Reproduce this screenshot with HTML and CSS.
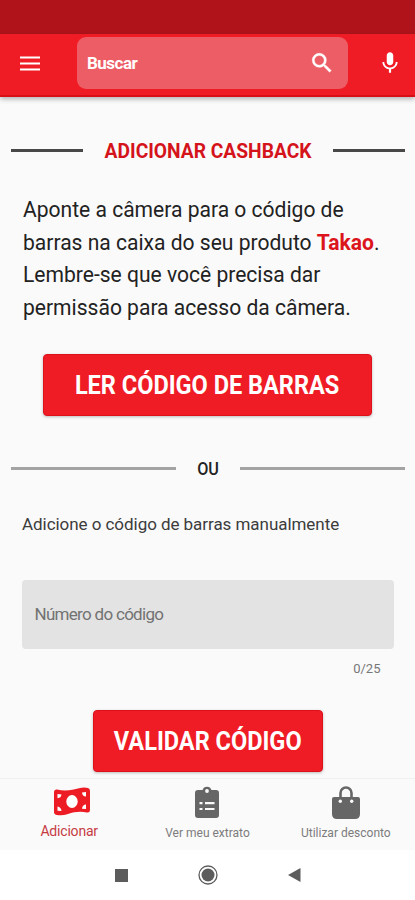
FILE: index.html
```
<!DOCTYPE html>
<html lang="pt-BR">
<head>
<meta charset="UTF-8">
<meta name="viewport" content="width=device-width, initial-scale=1.0">
<title>Adicionar Cashback</title>
<link rel="stylesheet" href="styles.css">
</head>
<body>
    <div class="status-bar"></div>
    <header class="header">
        <svg class="menu-icon" width="20" height="15" viewBox="0 0 20 15"><path d="M0 1.500h20M0 7.500h20M0 13.500h20" stroke="#fff" stroke-width="2"/></svg>
        <div class="search">
            <span class="search-text">Buscar</span>
            <svg width="26" height="26" viewBox="0 0 24 24" fill="#fff" stroke="#fff" stroke-width=".4"><path d="M15.5 14h-.79l-.28-.27A6.47 6.47 0 0 0 16 9.500 6.500 6.500 0 1 0 9.500 16c1.610 0 3.090-.59 4.230-1.570l.27.28v.79l5 4.990L20.490 19l-4.990-5zm-6 0C7.010 14 5 11.990 5 9.500S7.010 5 9.500 5 14 7.010 14 9.500 11.990 14 9.500 14z"/></svg>
        </div>
        <svg class="mic-icon" width="26" height="26" viewBox="0 0 24 24" fill="#fff"><path d="M12 14c1.660 0 3-1.340 3-3V5c0-1.660-1.340-3-3-3S9 3.340 9 5v6c0 1.660 1.340 3 3 3zM17.300 11c0 3-2.540 5.100-5.300 5.100S6.700 14 6.700 11H5c0 3.410 2.720 6.230 6 6.720V21h2v-3.280c3.280-.48 6-3.300 6-6.720h-1.700z"/></svg>
    </header>

    <main class="content">
        <div class="divider title">
            <h1>ADICIONAR CASHBACK</h1>
        </div>
        <p class="intro">Aponte a câmera para o código de<br>barras na caixa do seu produto <b>Takao</b>.<br>Lembre-se que você precisa dar<br>permissão para acesso da câmera.</p>
        <button class="btn btn-scan"><span>LER CÓDIGO DE BARRAS</span></button>
        <div class="divider or"><span>OU</span></div>
        <label class="manual" for="code">Adicione o código de barras manualmente</label>
        <input class="code" type="text" id="code" maxlength="25" placeholder="Número do código">
        <div class="counter">0/25</div>
        <button class="btn btn-validate"><span>VALIDAR CÓDIGO</span></button>
    </main>

    <nav class="tabs">
        <div class="tab active">
            <svg width="38" height="34" viewBox="0 0 38 34">
                <path d="M1 6Q1 3 4 3.500C12 5.500 20 4 26 2.200Q31 .8 35 2Q37 2.500 37 5V24Q37 27 34 26.500C27 25 21 26 15 28Q9 30 4 29Q1 28.500 1 26Z" fill="#ed1c24"/>
                <ellipse cx="19" cy="15.500" rx="5.700" ry="6.500" fill="#fff"/>
                <path d="M4.500 8l4 .6q-.4 3.500-4 3.600zM29 6.500l4-.5v4.500q-3.600-.2-4-4zM4.500 20.500q3.600.5 4 4.600l-4-.3zM33 18.500v4.600l-4-.4q.4-3.900 4-4.200z" fill="#fff"/>
            </svg>
            <span>Adicionar</span>
        </div>
        <div class="tab">
            <svg width="26" height="34" viewBox="0 0 26 34">
                <path d="M4 4h4.500a4.700 4.700 0 0 1 9 0H22q3 0 3 3v22q0 3-3 3H4q-3 0-3-3V7q0-3 3-3z" fill="#666"/>
                <circle cx="13" cy="5" r="1.900" fill="#fafafa"/>
                <path d="M5.500 17.200h3M11 17.200h9.500M5.500 23h3M11 23h9.500" stroke="#fafafa" stroke-width="2.200"/>
            </svg>
            <span>Ver meu extrato</span>
        </div>
        <div class="tab">
            <svg width="30" height="34" viewBox="0 0 30 34">
                <path d="M9.500 15V7a5.500 5.500 0 0 1 11 0v8" fill="none" stroke="#666" stroke-width="2.600"/>
                <path d="M3 11h24q2 0 2 2v15q0 5-5 5H6q-5 0-5-5V13q0-2 2-2z" fill="#666"/>
                <circle cx="9.300" cy="15.300" r="1.700" fill="#fafafa"/>
                <circle cx="20.700" cy="15.300" r="1.700" fill="#fafafa"/>
            </svg>
            <span>Utilizar desconto</span>
        </div>
    </nav>
    <div class="system-nav">
        <svg width="13" height="13" viewBox="0 0 13 13"><path d="M0 0h13v13H0z" fill="#5c5c5c"/></svg>
        <svg width="20" height="20" viewBox="0 0 20 20"><circle cx="10" cy="10" r="9" fill="none" stroke="#5c5c5c" stroke-width="1.300"/><circle cx="10" cy="10" r="6.500" fill="#5c5c5c"/></svg>
        <svg width="13" height="14" viewBox="0 0 13 14"><path d="M0 7L12.500 0v14z" fill="#5c5c5c"/></svg>
    </div>
</body>
</html>
```

FILE: styles.css
```
* {
    box-sizing: border-box;
}

body {
    margin: 0;
    width: 415px;
    height: 900px;
    overflow: hidden;
    display: flex;
    flex-direction: column;
    background-color: #fafafa;
    color: #222;
    font-family: Roboto, sans-serif;
}

svg {
    display: block;
    flex: none;
}

.status-bar {
    height: 34px;
    background-color: #b1131b;
}

.header {
    height: 63px;
    display: flex;
    align-items: flex-start;
    padding: 3px 12px 0 20px;
    background-color: #ef1c25;
    border-bottom: 2px solid #d90f17;
    box-shadow: 0 2px 5px rgba(0, 0, 0, 0.3);
}

.menu-icon {
    margin: 19px 37px 0 0;
}

.search {
    width: 271px;
    height: 52px;
    display: flex;
    align-items: center;
    justify-content: space-between;
    padding: 0 13px 0 10px;
    border-radius: 9px;
    background-color: #ed5d65;
    color: #fff;
    font-size: 17px;
    font-weight: bold;
}

.search-text {
    letter-spacing: -0.5px;
}

.mic-icon {
    margin: 13px 0 0 29px;
}

.content {
    flex: 1;
    display: flex;
    flex-direction: column;
    align-items: center;
    min-height: 0;
}

.divider {
    width: 394px;
    display: flex;
    align-items: center;
    justify-content: space-between;
    white-space: nowrap;
}

.divider::before,
.divider::after {
    content: "";
    height: 3px;
}

.title {
    height: 30px;
    margin: 39px 0 0 1px;
}

.title::before,
.title::after {
    width: 72px;
    margin-bottom: 2px;
    background-color: #484848;
}

h1 {
    margin: 0;
    font-size: 21px;
    color: #d5131b;
    transform: scaleX(0.915);
}

.intro {
    width: 371px;
    margin: 28px 0 0 1px;
    font-size: 22px;
    line-height: 32.5px;
    white-space: nowrap;
    transform: scaleX(0.957);
    transform-origin: left;
}

.intro b {
    color: #dc141c;
}

.btn {
    flex: none;
    height: 62px;
    padding: 0;
    border: 1px solid #dc111a;
    border-radius: 4px;
    background-color: #ef1c25;
    box-shadow: 0 1px 3px rgba(0, 0, 0, 0.25);
    color: #fff;
    font-family: inherit;
    font-size: 26px;
    font-weight: bold;
    white-space: nowrap;
}

.btn span {
    display: inline-block;
    transform: scaleX(0.905);
}

.btn-scan {
    width: 329px;
    margin-top: 30px;
}

.or {
    height: 24px;
    margin: 40px 0 0 1px;
    font-size: 18px;
    font-weight: 500;
}

.or span {
    transform: scaleX(0.9);
}

.or::before,
.or::after {
    width: 165px;
    background-color: #a3a3a3;
}

.manual {
    width: 371px;
    margin-top: 33px;
    font-size: 17px;
    line-height: 22px;
    letter-spacing: -0.05px;
    color: #3c3c3c;
}

.code {
    width: 372px;
    height: 69px;
    flex: none;
    margin-top: 45px;
    padding: 0 13px 2px;
    border: none;
    border-radius: 4px;
    background-color: #e3e3e3;
    font-family: inherit;
    font-size: 17px;
    letter-spacing: -0.7px;
}

.code::placeholder {
    color: #727272;
}

.counter {
    width: 346px;
    margin-top: 12px;
    font-size: 13px;
    line-height: 16px;
    text-align: right;
    color: #777;
}

.btn-validate {
    width: 230px;
    margin-top: 33px;
}

.tabs {
    height: 72px;
    display: grid;
    grid-template-columns: repeat(3, 1fr);
    padding-top: 7px;
    border-top: 1px solid #f0f0f0;
    background-color: #fafafa;
}

.tab {
    display: flex;
    flex-direction: column;
    align-items: center;
    font-size: 12px;
    line-height: 16px;
    color: #7c7c7c;
    white-space: nowrap;
}

.tab span {
    margin-top: 5px;
}

.tab.active {
    font-size: 14px;
    letter-spacing: -0.2px;
    color: #c63b42;
}

.tab.active svg {
    margin-left: 5px;
}

.tab.active span {
    margin-top: 3px;
}

.system-nav {
    height: 50px;
    display: flex;
    align-items: center;
    gap: 70px;
    padding-left: 115px;
    background-color: #fff;
}
```
